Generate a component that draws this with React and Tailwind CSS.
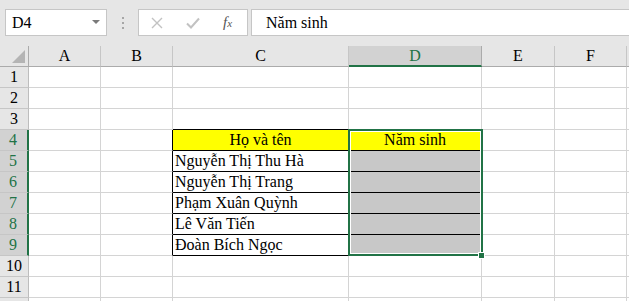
import React from "react";

const COLS = [
  { L: "A", w: "w-[72px]" },
  { L: "B", w: "w-[72px]" },
  { L: "C", w: "w-[176px]" },
  { L: "D", w: "w-[133px]" },
  { L: "E", w: "w-[73px]" },
  { L: "F", w: "w-[72px]" },
];
const names = {
  5: "Nguyễn Thị Thu Hà",
  6: "Nguyễn Thị Trang",
  7: "Phạm Xuân Quỳnh",
  8: "Lê Văn Tiến",
  9: "Đoàn Bích Ngọc",
};

function Cell({ w, className, children }) {
  return (
    <div className={"shrink-0 h-full border-r border-b overflow-hidden whitespace-nowrap leading-[20px] " + w + " " + className}>
      {children}
    </div>
  );
}

function Row({ r, label = true }) {
  const inTable = r >= 4 && r <= 9;
  return (
    <div className="flex h-[21px]">
      <div
        className={
          inTable
            ? "shrink-0 w-[29px] h-full bg-[#d2d2d2] text-[#217346] border-b border-b-[#c6c6c6] border-r-2 border-r-[#217346] text-center leading-[20px] pr-[1px]"
            : "shrink-0 w-[29px] h-full bg-[#e6e6e6] text-black border-b border-b-[#c6c6c6] border-r border-r-[#bdbdbd] text-center leading-[20px]"
        }
      >
        {label ? r : ""}
      </div>
      <Cell w="w-[72px]" className="border-[#d4d4d4]" />
      <Cell w="w-[72px]" className={inTable ? "border-b-[#d4d4d4] border-r-black" : "border-[#d4d4d4]"} />
      <Cell
        w="w-[176px]"
        className={
          r === 4
            ? "border-black bg-[#ffff00] text-center"
            : inTable
            ? "border-black bg-white pl-[2px]"
            : r === 3
            ? "border-r-[#d4d4d4] border-b-black"
            : "border-[#d4d4d4]"
        }
      >
        {r === 4 ? "Họ và tên" : names[r] || ""}
      </Cell>
      <Cell
        w="w-[133px]"
        className={
          r === 4
            ? "border-black bg-[#ffff00] text-center"
            : inTable
            ? "border-black bg-[#c8c8c8]"
            : r === 3
            ? "border-r-[#d4d4d4] border-b-black"
            : "border-[#d4d4d4]"
        }
      >
        {r === 4 ? "Năm sinh" : ""}
      </Cell>
      <Cell w="w-[73px]" className="border-[#d4d4d4]" />
      <Cell w="w-[72px]" className="border-[#d4d4d4]" />
      <div className="flex-1 h-full border-b border-[#d4d4d4]" />
    </div>
  );
}

export default function App() {
  const rows = [1, 2, 3, 4, 5, 6, 7, 8, 9, 10, 11];
  return (
    <div className="relative w-[629px] h-[301px] overflow-hidden bg-white text-[16px] text-black font-['Liberation_Serif',serif]">
      {/* Formula bar */}
      <div className="h-[46px] bg-[#e6e6e6] flex items-start pt-[9px] pl-[5px]">
        <div className="w-[102px] h-[27px] bg-white border border-[#c6c6c6] flex items-center justify-between pl-[6px] pr-[6px]">
          <span className="leading-none">D4</span>
          <svg width="8" height="5" viewBox="0 0 8 5">
            <polygon points="0,0 8,0 4,4" fill="#7a7a7a" />
          </svg>
        </div>
        <div className="w-[31px] h-[27px] flex flex-col items-center justify-center gap-[3px]">
          <div className="w-[2px] h-[2px] bg-[#a6a6a6]" />
          <div className="w-[2px] h-[2px] bg-[#a6a6a6]" />
          <div className="w-[2px] h-[2px] bg-[#a6a6a6]" />
        </div>
        <div className="w-[110px] h-[27px] bg-white border border-[#c6c6c6] flex items-center">
          <svg width="12" height="12" viewBox="0 0 12 12" className="ml-[12px]">
            <path d="M1 1 L11 11 M11 1 L1 11" stroke="#c2c2c2" strokeWidth="1.4" fill="none" />
          </svg>
          <svg width="14" height="12" viewBox="0 0 14 12" className="ml-[23px]">
            <path d="M1 6.5 L5 10.5 L13 1.5" stroke="#c2c2c2" strokeWidth="2" fill="none" />
          </svg>
          <span className="ml-[23px] italic text-[15px] leading-none text-[#555]">
            f<span className="text-[11px]">x</span>
          </span>
        </div>
        <div className="ml-[3px] flex-1 h-[27px] bg-white border border-[#c6c6c6] border-r-0 flex items-center pl-[14px]">
          <span className="leading-none">Năm sinh</span>
        </div>
      </div>

      {/* Column headers */}
      <div className="flex h-[21px] bg-[#e6e6e6]">
        <div className="shrink-0 w-[29px] h-full border-r border-b border-[#ababab] flex items-end justify-end pr-[3px] pb-[3px]">
          <svg width="13" height="13" viewBox="0 0 13 13">
            <polygon points="13,0 13,13 0,13" fill="#b4b4b4" />
          </svg>
        </div>
        {COLS.map((c) => (
          <div
            key={c.L}
            className={
              "shrink-0 h-full text-center " +
              c.w +
              " " +
              (c.L === "D"
                ? "bg-[#d2d2d2] text-[#217346] border-r border-r-[#ababab] border-b-2 border-b-[#217346] leading-[19px]"
                : "border-r border-r-[#c6c6c6] border-b border-b-[#ababab] leading-[20px]")
            }
          >
            {c.L}
          </div>
        ))}
        <div className="flex-1 h-full border-b border-[#ababab]" />
      </div>

      {/* Rows */}
      {rows.map((r) => (
        <Row key={r} r={r} />
      ))}
      <Row r={12} label={false} />

      {/* Selection outline over D4:D9 */}
      <div className="absolute left-[348px] top-[129px] w-[135px] h-[127px] border-2 border-[#217346] shadow-[inset_0_0_0_1px_white] pointer-events-none" />
      <div className="absolute left-[478px] top-[252px] w-[7px] h-[7px] bg-[#217346] border border-white pointer-events-none" />
    </div>
  );
}
